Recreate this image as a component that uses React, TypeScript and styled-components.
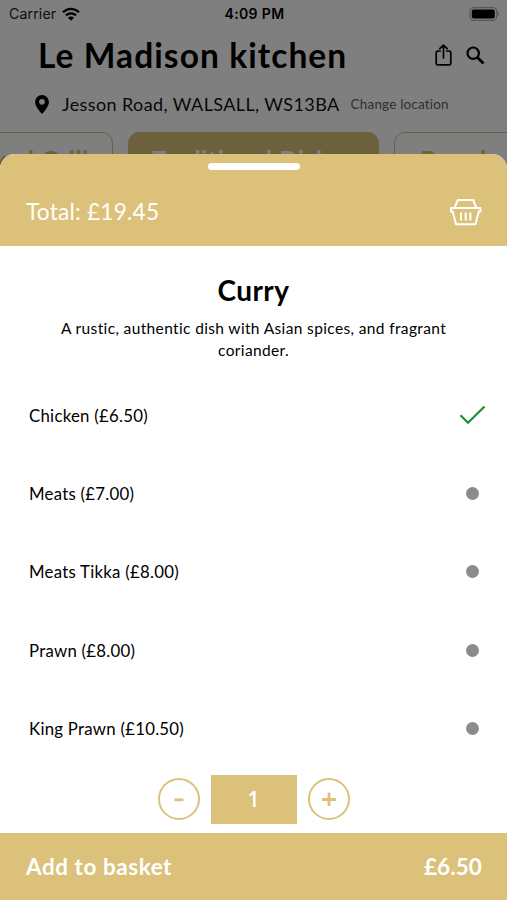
import React, { useState } from "react";
import styled, { createGlobalStyle } from "styled-components";

const GOLD = "#dbc17a";

const GlobalStyle = createGlobalStyle`
  *, *::before, *::after { box-sizing: border-box; }
  body { margin: 0; background: #fff; }
  button { font: inherit; color: inherit; background: none; border: 0; padding: 0; }
`;

const Screen = styled.div`
  position: relative;
  width: 507px;
  height: 900px;
  overflow: hidden;
  background: #fff;
  color: #000;
  font-family: Lato, sans-serif;
`;

const StatusBar = styled.div`
  display: grid;
  grid-template-columns: 1fr auto 1fr;
  align-items: center;
  height: 28px;
  padding: 0 7px 0 9px;
  font: 400 14.2px/28px Inter, sans-serif;
`;

const Carrier = styled.div`
  display: flex;
  align-items: center;
  gap: 6px;
  color: #222;
  letter-spacing: 0.1px;
`;

const Clock = styled.div`
  font-weight: 600;
  font-size: 14px;
  letter-spacing: 0.35px;
`;

const Battery = styled.svg`
  justify-self: end;
`;

const TitleRow = styled.div`
  display: flex;
  align-items: center;
  height: 54px;
  padding: 0 22px 0 38px;
`;

const Title = styled.h1`
  margin: 0;
  flex: 1;
  font-size: 33.5px;
  line-height: 54px;
  font-weight: 700;
  letter-spacing: 1.08px;
  white-space: nowrap;
`;

const TitleActions = styled.div`
  display: flex;
  align-items: center;
  gap: 14px;
`;

const AddressRow = styled.div`
  display: flex;
  align-items: center;
  height: 44px;
  padding-left: 35px;
  white-space: nowrap;
`;

const Address = styled.span`
  margin-left: 13px;
  font-size: 18px;
  letter-spacing: 0.4px;
  color: #111;
`;

const ChangeLink = styled.span`
  margin-left: 11px;
  font-size: 13.5px;
  letter-spacing: 0.18px;
  color: #57646a;
`;

const Chips = styled.div`
  display: flex;
  gap: 15px;
  margin: 6px 0 0 -60px;
`;

const Chip = styled.div<{ $active?: boolean; $width: number }>`
  flex: none;
  width: ${(p) => p.$width}px;
  height: 54px;
  border: 1.5px solid ${GOLD};
  border-radius: 11px;
  background: ${(p) => (p.$active ? GOLD : "#fff")};
  color: ${(p) => (p.$active ? "#fff" : GOLD)};
  font-size: 24px;
  line-height: 54px;
  font-weight: 700;
  letter-spacing: 0.7px;
  text-align: center;
  white-space: nowrap;
`;

const Backdrop = styled.div`
  position: absolute;
  inset: 0;
  background: rgba(0, 0, 0, 0.5);
`;

const Sheet = styled.section`
  position: absolute;
  left: 0;
  right: 0;
  bottom: 0;
  height: 746px;
  display: flex;
  flex-direction: column;
  border-radius: 15px 15px 0 0;
  overflow: hidden;
  background: #fff;
`;

const SheetHeader = styled.header`
  display: flex;
  flex-direction: column;
  height: 92px;
  background: ${GOLD};
  color: #fff;
`;

const Handle = styled.div`
  align-self: center;
  width: 92px;
  height: 7px;
  margin-top: 9px;
  border-radius: 4px;
  background: #fff;
`;

const TotalRow = styled.div`
  display: flex;
  align-items: center;
  justify-content: space-between;
  height: 76px;
  padding: 8px 25px 0 26px;
`;

const Total = styled.span`
  font-size: 22.7px;
  line-height: 30px;
  letter-spacing: 0.2px;
`;

const DishName = styled.h2`
  margin: 25px 0 0;
  font-size: 28px;
  line-height: 38px;
  font-weight: 700;
  letter-spacing: 0.4px;
  text-align: center;
`;

const Description = styled.p`
  width: 400px;
  margin: 8px auto 0;
  font-size: 15.5px;
  line-height: 22px;
  letter-spacing: 0.36px;
  text-align: center;
`;

const Options = styled.div`
  display: flex;
  flex-direction: column;
  margin-top: 15.4px;
`;

const Option = styled.button`
  display: flex;
  align-items: center;
  justify-content: space-between;
  height: 78.2px;
  padding: 0 20px 0 29px;
  font-size: 16.8px;
  letter-spacing: 0.26px;
`;

const Marker = styled.span`
  display: grid;
  place-items: center;
  width: 29px;
`;

const Dot = styled.span`
  width: 13px;
  height: 13px;
  border-radius: 50%;
  background: #8b8b8b;
`;

const Stepper = styled.div`
  display: flex;
  align-items: center;
  justify-content: center;
  gap: 11px;
  height: 49px;
  margin-top: 7.6px;
`;

const StepButton = styled.button`
  display: grid;
  place-items: center;
  width: 42px;
  height: 42px;
  border: 2px solid ${GOLD};
  border-radius: 50%;
`;

const Quantity = styled.div`
  width: 86px;
  height: 49px;
  background: ${GOLD};
  color: #fff;
  font-family: "Open Sans", sans-serif;
  font-size: 21px;
  line-height: 48px;
  font-weight: 600;
  text-align: center;
`;

const AddBar = styled.button`
  display: flex;
  align-items: center;
  justify-content: space-between;
  height: 67px;
  margin-top: auto;
  padding: 0 25px 0 26px;
  background: ${GOLD};
  color: #fff;
  font-size: 22.5px;
  font-weight: 700;
  letter-spacing: 0.55px;
`;

const BarPrice = styled.span`
  letter-spacing: 0.1px;
`;

const WifiIcon = () => (
  <svg width="18" height="14" viewBox="0 0 18 14" fill="none" stroke="#000" strokeWidth="2.3">
    <path d="M1 5.3C5.6 .7 12.4 .7 17 5.3M4 8.4c2.9-2.8 7.1-2.8 10 0" />
    <path d="M6 10.7c1.8-1.5 4.2-1.5 6 0l-3 3z" fill="#000" stroke="none" />
  </svg>
);

const BatteryIcon = () => (
  <Battery width="31" height="14" viewBox="0 0 31 14">
    <rect x="1" y=".7" width="26.6" height="12.6" rx="3.6" fill="none" stroke="#b0b0b0" strokeWidth="1.2" />
    <rect x="2.8" y="2.5" width="23" height="9" rx="2" fill="#000" />
    <path d="M28.6 4.7c1.9.7 1.9 3.9 0 4.6z" fill="#b0b0b0" />
  </Battery>
);

const ShareIcon = () => (
  <svg width="17" height="22" viewBox="0 0 17 22" fill="none" stroke="#000" strokeWidth="1.7" strokeLinecap="round" strokeLinejoin="round">
    <path d="M5.3 7H3Q1.2 7 1.2 8.8V19Q1.2 20.8 3 20.8H14Q15.8 20.8 15.8 19V8.8Q15.8 7 14 7H11.7" />
    <path d="M8.5 14V1.2M4.8 4.7l3.7-3.6 3.7 3.6" />
  </svg>
);

const SearchIcon = () => (
  <svg width="19" height="19" viewBox="0 0 19 19" fill="none" stroke="#000">
    <circle cx="7.2" cy="7.2" r="5.7" strokeWidth="2.2" />
    <path d="M11.5 11.5l6 6" strokeWidth="2.9" />
  </svg>
);

const PinIcon = () => (
  <svg width="14" height="19" viewBox="0 0 14 19">
    <path fillRule="evenodd" d="M7 0a6.9 6.9 0 0 1 6.9 6.9C13.9 11.2 9.2 16.4 7 19 4.8 16.4 .1 11.2 .1 6.9A6.9 6.9 0 0 1 7 0zm0 3.9a2.9 2.9 0 1 0 0 5.8 2.9 2.9 0 0 0 0-5.8z" />
  </svg>
);

const BasketIcon = () => (
  <svg width="32" height="28" viewBox="0 0 32 28" fill="none" stroke="#fff" strokeWidth="2" strokeLinejoin="round">
    <path d="M4.5 10L7.8 2H23.2L26.5 10M1 10H30.5V13.5H28.8L25.5 26.2H6L2.7 13.5H1ZM11 14.5V22.5M15.7 14.5V22.5M20.4 14.5V22.5" />
  </svg>
);

const CheckIcon = () => (
  <svg width="27" height="20" viewBox="0 0 27 20" fill="none" stroke="#218c35" strokeWidth="2.2">
    <path d="M1.5 10.2L9 17.8L25.5 1.5" />
  </svg>
);

const GlyphIcon = ({ plus }: { plus?: boolean }) => (
  <svg width="14" height="14" viewBox="0 0 14 14" stroke={GOLD} strokeWidth="2.8">
    <path d={plus ? "M0 7.5H14M7 .5V14.5" : "M2.5 7.8H11.5"} />
  </svg>
);

const choices = [
  { name: "Chicken", price: "6.50" },
  { name: "Meats", price: "7.00" },
  { name: "Meats Tikka", price: "8.00" },
  { name: "Prawn", price: "8.00" },
  { name: "King Prawn", price: "10.50" },
];

export default function App() {
  const [selected, setSelected] = useState(0);
  const [quantity, setQuantity] = useState(1);

  return (
    <>
      <GlobalStyle />
      <Screen>
        <StatusBar>
          <Carrier>Carrier<WifiIcon /></Carrier>
          <Clock>4:09 PM</Clock>
          <BatteryIcon />
        </StatusBar>
        <TitleRow>
          <Title>Le Madison kitchen</Title>
          <TitleActions><ShareIcon /><SearchIcon /></TitleActions>
        </TitleRow>
        <AddressRow>
          <PinIcon />
          <Address>Jesson Road, WALSALL, WS13BA</Address>
          <ChangeLink>Change location</ChangeLink>
        </AddressRow>
        <Chips>
          <Chip $width={173}>Mixed Grill</Chip>
          <Chip $width={251} $active>Traditional Dishes</Chip>
          <Chip $width={130}>Breads</Chip>
        </Chips>
        <Backdrop />
        <Sheet>
          <SheetHeader>
            <Handle />
            <TotalRow><Total>Total: £19.45</Total><BasketIcon /></TotalRow>
          </SheetHeader>
          <DishName>Curry</DishName>
          <Description>A rustic, authentic dish with Asian spices, and fragrant coriander.</Description>
          <Options>
            {choices.map((c, i) => (
              <Option key={c.name} onClick={() => setSelected(i)}>
                <span>{c.name} (£{c.price})</span>
                <Marker>{i === selected ? <CheckIcon /> : <Dot />}</Marker>
              </Option>
            ))}
          </Options>
          <Stepper>
            <StepButton aria-label="Decrease" onClick={() => setQuantity(Math.max(1, quantity - 1))}><GlyphIcon /></StepButton>
            <Quantity>{quantity}</Quantity>
            <StepButton aria-label="Increase" onClick={() => setQuantity(quantity + 1)}><GlyphIcon plus /></StepButton>
          </Stepper>
          <AddBar>
            <span>Add to basket</span>
            <BarPrice>£{(6.5 * quantity).toFixed(2)}</BarPrice>
          </AddBar>
        </Sheet>
      </Screen>
    </>
  );
}
